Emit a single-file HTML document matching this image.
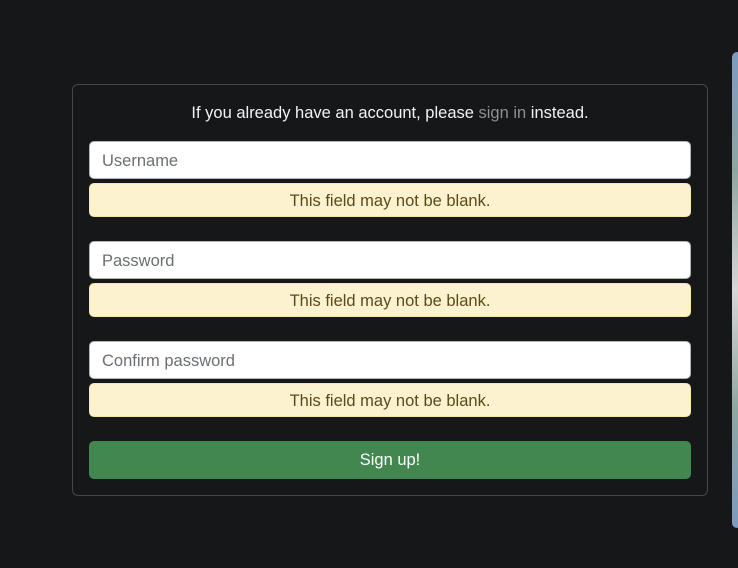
<!DOCTYPE html>
<html><head><style>
body{margin:0;width:738px;height:568px;background:#161719;font-family:"Liberation Sans",sans-serif;position:relative;overflow:hidden}
.card{position:absolute;left:72px;top:84px;width:636px;height:412px;border:1px solid #45474b;border-radius:6px;box-sizing:border-box}
.t{position:absolute;left:89px;width:602px;top:104px;text-align:center;color:#f2f2f2;font-size:16.5px}
.t span{color:#8f8f8f}
.in{position:absolute;left:89px;width:602px;height:38px;background:#fff;border:1px solid #b4b4b4;border-radius:5px;box-sizing:border-box;color:#6b6f74;font-size:16.5px;line-height:38px;padding-left:12px}
.al{position:absolute;left:89px;width:602px;height:34px;background:#fcf2cf;border:1px solid #f7e6a6;border-radius:5px;box-sizing:border-box;color:#5c4a18;font-size:16.5px;line-height:34px;text-align:center}
.btn{position:absolute;left:89px;top:441px;width:602px;height:38px;background:#41874f;border-radius:5px;color:#fff;font-size:16.5px;line-height:39px;text-align:center}
.side{position:absolute;left:732px;top:52px;width:10px;height:476px;border-radius:5px;background:linear-gradient(#7d9bc0,#8fa6a0 25%,#d6d6d4 50%,#8fa6a0 75%,#7d9bc0)}
</style></head><body>
<div class="card"></div>
<div class="t">If you already have an account, please <span>sign in</span> instead.</div>
<div class="in" style="top:141px">Username</div>
<div class="al" style="top:183px">This field may not be blank.</div>
<div class="in" style="top:241px">Password</div>
<div class="al" style="top:283px">This field may not be blank.</div>
<div class="in" style="top:341px">Confirm password</div>
<div class="al" style="top:383px">This field may not be blank.</div>
<div class="btn">Sign up!</div>
<div class="side"></div>
</body></html>
